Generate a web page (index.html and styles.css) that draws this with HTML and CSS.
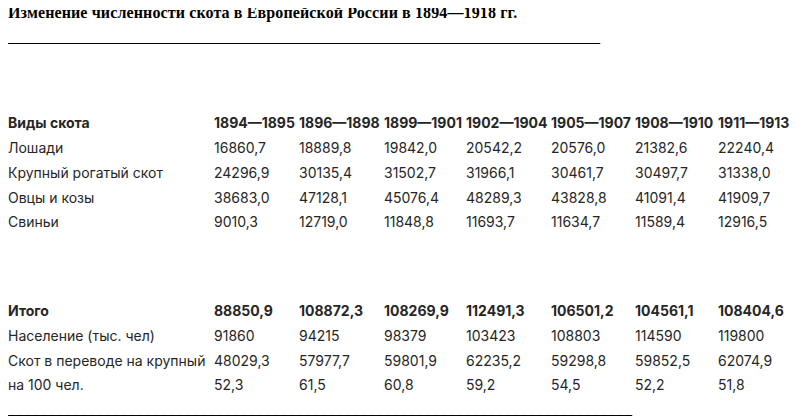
FILE: index.html
```html
<!DOCTYPE html>
<html lang="ru">
<head>
<meta charset="utf-8">
<link rel="stylesheet" href="styles.css">
</head>
<body>
<p class="title"><b>Изменение численности скота в Европейской России в 1894—1918 гг.</b></p>
<p class="rule">__________________________________________________________________________</p>
<table class="data">
<colgroup>
<col class="c-label"><col class="c1"><col class="c2"><col class="c3"><col class="c4"><col class="c5"><col class="c6"><col class="c7">
</colgroup>
<tbody>
<tr class="head"><td>Виды скота</td><td>1894—1895</td><td>1896—1898</td><td>1899—1901</td><td>1902—1904</td><td>1905—1907</td><td>1908—1910</td><td>1911—1913</td></tr>
<tr><td>Лошади</td><td>16860,7</td><td>18889,8</td><td>19842,0</td><td>20542,2</td><td>20576,0</td><td>21382,6</td><td>22240,4</td></tr>
<tr><td>Крупный рогатый скот</td><td>24296,9</td><td>30135,4</td><td>31502,7</td><td>31966,1</td><td>30461,7</td><td>30497,7</td><td>31338,0</td></tr>
<tr><td>Овцы и козы</td><td>38683,0</td><td>47128,1</td><td>45076,4</td><td>48289,3</td><td>43828,8</td><td>41091,4</td><td>41909,7</td></tr>
<tr><td>Свиньи</td><td>9010,3</td><td>12719,0</td><td>11848,8</td><td>11693,7</td><td>11634,7</td><td>11589,4</td><td>12916,5</td></tr>
<tr class="spacer"><td colspan="8"></td></tr>
<tr class="head"><td>Итого</td><td>88850,9</td><td>108872,3</td><td>108269,9</td><td>112491,3</td><td>106501,2</td><td>104561,1</td><td>108404,6</td></tr>
<tr><td>Население (тыс. чел)</td><td>91860</td><td>94215</td><td>98379</td><td>103423</td><td>108803</td><td>114590</td><td>119800</td></tr>
<tr><td>Скот в переводе на крупный</td><td>48029,3</td><td>57977,7</td><td>59801,9</td><td>62235,2</td><td>59298,8</td><td>59852,5</td><td>62074,9</td></tr>
<tr><td>на 100 чел.</td><td>52,3</td><td>61,5</td><td>60,8</td><td>59,2</td><td>54,5</td><td>52,2</td><td>51,8</td></tr>
</tbody>
</table>
<p class="rule rule-bottom">______________________________________________________________________________</p>
</body>
</html>
```

FILE: styles.css
```css
html, body {
  background: #ffffff;
}
body {
  margin: 8px;
  font-family: "Liberation Serif", "Times New Roman", serif;
  color: #000;
}
.title {
  margin: 0;
  margin-top: -4px;
  font-size: 16px;
  line-height: 18px;
  letter-spacing: 0.12px;
}
.rule {
  margin: 0;
  font-size: 16px;
  line-height: 18px;
  padding-top: 6px;
  overflow: hidden;
  white-space: nowrap;
}
.data {
  margin-top: 65px;
  border-collapse: collapse;
  table-layout: fixed;
  width: 792px;
  font-family: Inter, "Open Sans", sans-serif;
  font-size: 14px;
  color: #262626;
}
.data td {
  padding: 0;
  height: 24.75px;
  line-height: 18px;
  white-space: nowrap;
  vertical-align: middle;
}
.c-label { width: 206px; }
.c1 { width: 85px; }
.c2 { width: 85px; }
.c3 { width: 82px; }
.c4 { width: 85px; }
.c5 { width: 84px; }
.c6 { width: 83px; }
.c7 { width: 82px; }
.head td {
  font-weight: 700;
}
.spacer td {
  height: 64px;
}
.rule-bottom {
  padding-top: 2px;
}
```
